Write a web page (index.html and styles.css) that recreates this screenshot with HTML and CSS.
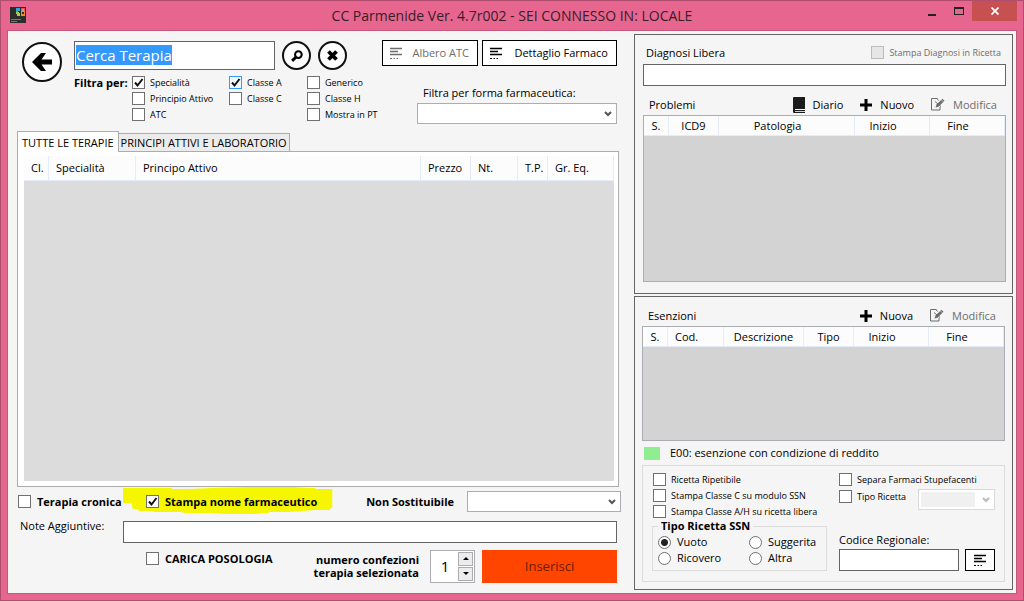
FILE: index.html
```html
<!DOCTYPE html>
<html lang="it">
<head>
<meta charset="utf-8">
<meta name="viewport" content="width=device-width, initial-scale=1">
<title>CC Parmenide Ver. 4.7r002</title>
<link rel="stylesheet" href="styles.css">
<script src="app.js" defer></script>
</head>
<body>
<svg class="defs" aria-hidden="true">
  <symbol id="i-list" viewBox="0 0 14 14"><path d="M1 2.500h12M1 5.500h8M1 8.500h12" stroke="currentColor" stroke-width="1.500" fill="none"/><path d="M1 12.500h2M4.500 12.500h1.500M7.500 12.500h1.500" stroke="currentColor" fill="none"/></symbol>
  <symbol id="i-plus" viewBox="0 0 12 12"><path d="M6 0v12M0 6h12" stroke="currentColor" stroke-width="3"/></symbol>
  <symbol id="i-edit" viewBox="0 0 14 13"><path d="M6.500 .5H.5v11.500h8.500V9M6 .5L7.500 2.500" fill="none" stroke="currentColor"/><path d="M4.500 9.500l1-3L11.500 .8 13.500 2.800 7.500 8.700z" fill="currentColor"/><path d="M4 3.500l6 5" stroke="currentColor"/><path d="M10.300 1.800l2 2" stroke="#f5f5f5" stroke-width=".6"/></symbol>
</svg>
<div class="window">
  <header class="titlebar">
    <svg class="app-logo" viewBox="0 0 16 16" aria-hidden="true"><path fill="#2d2d2d" d="M0 0h16v16H0z"/><path fill="#28a9d8" d="M6 1h4v3H8v2H6z"/><path fill="#a8cf45" d="M6 5h3v1h1v3H7V7H6z"/><path fill="#e8504a" d="M11 1h4v3h-1V2h-2v2h-1z"/><path fill="#a9a9a9" d="M12 2h2v3h-2z"/><path fill="#f28a2c" d="M11 4h1v3h2V4h1v5h-4z"/><path stroke="#aaa" stroke-width=".6" d="M1 12.500h10M1 14.500h6"/></svg>
    <h1 class="title">CC Parmenide Ver. 4.7r002 - SEI CONNESSO IN: LOCALE</h1>
    <div class="controls">
      <button class="ctl" aria-label="Riduci a icona"><svg width="8" height="12"><path fill="#222" d="M0 9h8v2H0z"/></svg></button>
      <button class="ctl" aria-label="Ingrandisci"><svg width="10" height="12"><path fill="#222" fill-rule="evenodd" d="M0 2h10v8H0zM1 4v5h8V4z"/></svg></button>
      <button class="ctl close" aria-label="Chiudi"><svg width="8" height="8"><path d="M.5.5l7 7M7.500.5l-7 7" stroke="#fff" stroke-width="1.700"/></svg></button>
    </div>
  </header>

  <main class="content">
    <section class="therapy">
      <div class="search-area">
        <button class="round back" aria-label="Indietro"><svg width="20" height="20" viewBox="0 0 20 20"><path fill="#000" d="M0 10L9 1h5L9.500 7.500H20v5H9.500L14 19H9z"/></svg></button>
        <div class="search">
          <div class="search-row">
            <input class="field search-field" id="cerca" type="text" value="Cerca Terapia" aria-label="Cerca Terapia">
            <button class="round" aria-label="Cerca"><svg width="12" height="12" viewBox="0 0 13 13"><circle cx="8" cy="5" r="3.600" fill="none" stroke="#000" stroke-width="2.200"/><path d="M5.500 7.500L1.200 11.800" stroke="#000" stroke-width="3.200"/></svg></button>
            <button class="round" aria-label="Cancella"><svg width="11" height="11" viewBox="0 0 11 11"><path d="M1.500 1.500l8 8M9.500 1.500l-8 8" stroke="#000" stroke-width="3.800"/></svg></button>
          </div>
          <div class="filters">
            <span class="bold">Filtra per:</span>
            <div class="checks">
              <label class="check"><input type="checkbox" checked>Specialità</label>
              <label class="check"><input type="checkbox">Principio Attivo</label>
              <label class="check"><input type="checkbox">ATC</label>
            </div>
            <div class="checks">
              <label class="check"><input class="hot" type="checkbox" checked>Classe A</label>
              <label class="check"><input type="checkbox">Classe C</label>
            </div>
            <div class="checks">
              <label class="check"><input type="checkbox">Generico</label>
              <label class="check"><input type="checkbox">Classe H</label>
              <label class="check"><input type="checkbox">Mostra in PT</label>
            </div>
          </div>
        </div>
        <div class="actions">
          <div class="action-row">
            <button class="btn" disabled><svg class="icon"><use href="#i-list"/></svg>Albero ATC</button>
            <button class="btn"><svg class="icon"><use href="#i-list"/></svg>Dettaglio Farmaco</button>
          </div>
          <label class="form-label" for="forma">Filtra per forma farmaceutica:</label>
          <select class="select form-select" id="forma"><option></option></select>
        </div>
      </div>

      <div class="tabs" role="tablist">
        <button class="tab active" role="tab" aria-selected="true">TUTTE LE TERAPIE</button>
        <button class="tab" role="tab" aria-selected="false">PRINCIPI ATTIVI E LABORATORIO</button>
      </div>
      <div class="tab-panel" role="tabpanel">
        <table class="grid tall">
          <colgroup><col class="w25"><col class="w87"><col><col class="w50"><col class="w47"><col class="w30"><col class="w66"></colgroup>
          <thead><tr><th>Cl.</th><th>Specialità</th><th>Principo Attivo</th><th>Prezzo</th><th>Nt.</th><th>T.P.</th><th>Gr. Eq.</th></tr></thead>
        </table>
      </div>

      <div class="row options">
        <label class="check strong chronic"><input type="checkbox">Terapia cronica</label>
        <div class="marked">
          <svg class="marker" viewBox="0 0 212 28" preserveAspectRatio="none" aria-hidden="true"><path fill="#f6f600" d="M0 1h49v1h19l22-1 37-1h44l16 1h7v1h17v19h-2v2h-16l-12 1-16 1h-18v1l-17 1h-27l-15-1h-25l-5-1H31v-1H16l-1-2H10l-1-3H9v-3H0z"/></svg>
          <label class="check strong"><input type="checkbox" checked>Stampa nome farmaceutico</label>
        </div>
        <label class="bold push" for="nonsost">Non Sostituibile</label>
        <select class="select replace-select" id="nonsost"><option></option></select>
      </div>
      <div class="row notes">
        <label class="notes-label" for="note">Note Aggiuntive:</label>
        <input class="field grow" id="note" type="text">
      </div>
      <div class="row submit">
        <label class="check strong dosage"><input type="checkbox">CARICA POSOLOGIA</label>
        <label class="bold packs" for="packs">numero confezioni<br>terapia selezionata</label>
        <div class="spinner">
          <input id="packs" type="text" inputmode="numeric" value="1">
          <div class="spin-buttons">
            <button aria-label="Aumenta"><svg width="6" height="3"><path d="M0 3l3-3 3 3z"/></svg></button>
            <button aria-label="Diminuisci"><svg width="6" height="3"><path d="M0 0l3 3 3-3z"/></svg></button>
          </div>
        </div>
        <button class="insert">Inserisci</button>
      </div>
    </section>

    <aside class="side">
      <section class="panel problems">
        <div class="bar diagnosis">
          <label for="diagnosi">Diagnosi Libera</label>
          <label class="check disabled"><input type="checkbox" disabled>Stampa Diagnosi in Ricetta</label>
        </div>
        <input class="field" id="diagnosi" type="text">
        <div class="bar tools">
          <h2 class="heading">Problemi</h2>
          <button class="tool"><svg class="book" viewBox="0 0 12 16"><path fill="#1c1c1c" d="M0 1q0-1 1-1h11v12H2v1h10v3H1q-1 0-1-1z"/><path d="M2 12.500h10M2 14.500h10" stroke="#fff" stroke-width=".8"/></svg>Diario</button>
          <button class="tool"><svg class="plus"><use href="#i-plus"/></svg>Nuovo</button>
          <button class="tool" disabled><svg class="edit"><use href="#i-edit"/></svg>Modifica</button>
        </div>
        <div class="grid-box">
          <table class="grid centered">
            <colgroup><col class="w25"><col class="w50"><col><col class="w75"><col class="w75"></colgroup>
            <thead><tr><th>S.</th><th>ICD9</th><th class="shift">Patologia</th><th class="shift">Inizio</th><th class="shift">Fine</th></tr></thead>
          </table>
        </div>
      </section>

      <section class="panel exemptions">
        <div class="bar tools">
          <h2 class="heading">Esenzioni</h2>
          <button class="tool"><svg class="plus"><use href="#i-plus"/></svg>Nuova</button>
          <button class="tool" disabled><svg class="edit"><use href="#i-edit"/></svg>Modifica</button>
        </div>
        <div class="grid-box">
          <table class="grid centered">
            <colgroup><col class="w25"><col class="w56"><col><col class="w50"><col class="w75"><col class="w75"></colgroup>
            <thead><tr><th>S.</th><th class="left">Cod.</th><th>Descrizione</th><th>Tipo</th><th class="shift">Inizio</th><th class="shift">Fine</th></tr></thead>
          </table>
        </div>
        <p class="legend"><span class="swatch"></span>E00: esenzione con condizione di reddito</p>
        <div class="recipe">
          <div class="recipe-left">
            <div class="checks">
              <label class="check"><input type="checkbox">Ricetta Ripetibile</label>
              <label class="check"><input type="checkbox">Stampa Classe C su modulo SSN</label>
              <label class="check"><input type="checkbox">Stampa Classe A/H su ricetta libera</label>
            </div>
            <fieldset class="ssn">
              <legend>Tipo Ricetta SSN</legend>
              <label class="radio"><input type="radio" name="ssn" checked>Vuoto</label>
              <label class="radio"><input type="radio" name="ssn">Suggerita</label>
              <label class="radio"><input type="radio" name="ssn">Ricovero</label>
              <label class="radio"><input type="radio" name="ssn">Altra</label>
            </fieldset>
          </div>
          <div class="recipe-right">
            <label class="check"><input type="checkbox">Separa Farmaci Stupefacenti</label>
            <div class="type-row">
              <label class="check"><input type="checkbox">Tipo Ricetta</label>
              <select class="select type-select" aria-label="Tipo Ricetta" disabled><option></option></select>
            </div>
            <label class="code-label" for="codice">Codice Regionale:</label>
            <div class="code-row">
              <input class="field grow" id="codice" type="text">
              <button class="btn code-btn" aria-label="Elenco codici"><svg class="icon"><use href="#i-list"/></svg></button>
            </div>
          </div>
        </div>
      </section>
    </aside>
  </main>
</div>
</body>
</html>
```

FILE: app.js
```js
// Start with the search text selected, ready to be typed over.
const search = document.getElementById("cerca");
search.focus();
search.select();
```

FILE: styles.css
```css
*, *::before { box-sizing: border-box; }

body {
  margin: 0;
  font: 11px/16px "Open Sans", "Noto Sans", sans-serif;
  color: #000;
}

button, input, select { font: inherit; color: inherit; margin: 0; padding: 0; }
button { cursor: pointer; border: 0; background: none; }
svg { flex: none; display: block; }
.defs { position: absolute; width: 0; height: 0; }

/* Window frame */
.window {
  min-height: 100vh;
  display: flex;
  flex-direction: column;
  padding: 0 6px 6px;
  border: 1px solid #b04e70;
  background: #e6668f;
}
.titlebar {
  display: grid;
  grid-template-columns: 120px 1fr 120px;
  height: 29px;
}
.app-logo { width: 16px; height: 16px; margin: 6px 3px; }
.title {
  margin: 0;
  font-size: 14px;
  font-weight: 400;
  line-height: 29px;
  text-align: center;
  color: #3a1c28;
}
.controls { display: flex; justify-content: flex-end; align-items: flex-start; }
.ctl { width: 27px; height: 20px; display: grid; place-items: center; }
.close { width: 45px; background: #c75050; }

.content {
  flex: 1;
  display: grid;
  grid-template-columns: minmax(0, 604fr) minmax(0, 379fr);
  gap: 13px;
  padding: 3px 3px 3px 9px;
  border: 1px solid #c3587b;
  background: #f5f5f5;
}

/* Shared controls */
.field {
  width: 100%;
  height: 22px;
  padding: 0 4px;
  border: 1px solid #646464;
  background: #fff;
}
.grow { flex: 1; min-width: 0; }
.bold { font-weight: 700; }
.round {
  flex: none;
  width: 29px;
  height: 29px;
  display: grid;
  place-items: center;
  border: 2px solid #111;
  border-radius: 50%;
  background: #fff;
}
.btn {
  display: flex;
  align-items: center;
  justify-content: space-between;
  height: 26px;
  padding: 0 8px 0 6px;
  border: 1px solid #000;
  background: #fff;
  white-space: nowrap;
}
.icon { width: 14px; height: 14px; }
button:disabled { color: #6d6d6d; }
.select {
  appearance: none;
  height: 21px;
  border: 1px solid #abadb3;
  border-radius: 0;
  background: #fff url("data:image/svg+xml,%3Csvg xmlns='http://www.w3.org/2000/svg' width='8' height='6'%3E%3Cpath d='M1 1l3 3 3-3' fill='none' stroke='%23555' stroke-width='2'/%3E%3C/svg%3E") no-repeat right 4px center;
}
.select:disabled { opacity: 1; }

.checks { display: flex; flex-direction: column; gap: 3px; }
.check {
  display: flex;
  align-items: center;
  gap: 5px;
  font-size: 9px;
  line-height: 13px;
  white-space: nowrap;
}
.check input {
  appearance: none;
  flex: none;
  width: 13px;
  height: 13px;
  border: 1px solid #707070;
  background: #fff;
}
.check input:checked {
  background: url("data:image/svg+xml,%3Csvg xmlns='http://www.w3.org/2000/svg' width='11' height='11'%3E%3Cpath d='M2 5.500l2.500 3L9.500 2' fill='none' stroke='%23111' stroke-width='2'/%3E%3C/svg%3E") center no-repeat #fff;
}
.check input.hot { border-color: #3399ff; background-color: #f0f7ff; }
.strong { font-size: 11px; font-weight: 700; gap: 6px; }
.disabled { color: #6d6d6d; }
.disabled input { border-color: #bcbcbc; background: #e6e6e6; }

/* Therapy column */
.therapy { display: flex; flex-direction: column; padding-top: 6px; }
.search-area { display: flex; padding: 0 4px 0 5px; }
.back { width: 40px; height: 40px; margin: 2px 12px 0 0; }
.search-row {
  display: grid;
  grid-template-columns: 201px 29px 29px;
  column-gap: 7px;
  align-items: center;
  padding-top: 1px;
}
.search-field { height: 29px; padding: 0 1px 2px; font-size: 15px; outline: 0; }
.search-field::selection { background: #3399ff; color: #fff; }
.filters {
  display: grid;
  grid-template-columns: 58px 97px 78px 71px;
  padding-top: 6px;
}
.filters .bold { line-height: 13px; }
.actions { flex: 1; display: flex; flex-direction: column; padding-left: 4px; }
.action-row { display: grid; grid-template-columns: 96fr 135fr; gap: 4px; }
.form-label { margin: 19px 0 2px 41px; }
.form-select { margin-left: 35px; }

.tabs { display: flex; align-items: flex-end; margin-top: 7px; }
.tab {
  height: 18px;
  padding: 0 2px;
  border: 1px solid #acacac;
  border-width: 1px 1px 0 0;
  background: #ececec;
  line-height: 17px;
  white-space: nowrap;
}
.tab.active {
  position: relative;
  height: 21px;
  margin-bottom: -1px;
  padding: 0 4px;
  border-left-width: 1px;
  background: #fff;
}
.tab-panel {
  flex: 1;
  margin-right: 2px;
  padding: 4px 4px 5px 6px;
  border: 1px solid #acacac;
  background: linear-gradient(#dcdcdc, #dcdcdc) content-box, #fff;
}

.grid { width: 100%; table-layout: fixed; border-collapse: separate; border-spacing: 0; }
.grid th {
  height: 20px;
  padding: 0 0 0 7px;
  border: solid #e3ecf8;
  border-width: 0 1px 1px 0;
  background: #fcfcfc;
  font-weight: 400;
  text-align: left;
  white-space: nowrap;
}
.tall th { height: 25px; }
.centered th { padding: 0; text-align: center; }
.grid .left { padding-left: 7px; text-align: left; }
.grid .shift { padding-right: 18px; }
.w25 { width: 25px; }
.w30 { width: 30px; }
.w47 { width: 47px; }
.w50 { width: 50px; }
.w56 { width: 56px; }
.w66 { width: 66px; }
.w75 { width: 75px; }
.w87 { width: 87px; }

.row { display: flex; align-items: center; }
.options { height: 29px; }
.chronic { flex: none; width: 106px; padding-left: 1px; }
.marked { position: relative; padding: 0 16px 0 23px; }
.marker { position: absolute; left: 0; top: -8px; width: 100%; height: 28px; }
.marked .check { position: relative; }
.push { margin-left: auto; }
.replace-select { width: 154px; margin-left: 13px; }
.notes { height: 32px; padding-right: 4px; }
.notes-label { width: 106px; padding: 2px 0 0 3px; align-self: flex-start; }
.submit { height: 36px; padding-right: 4px; margin-bottom: 6px; }
.dosage { padding-left: 129px; align-self: flex-start; margin-top: 4px; }
.packs { margin-left: auto; text-align: right; line-height: 13px; }
.spinner {
  display: flex;
  width: 45px;
  height: 33px;
  margin: 0 7px 0 11px;
  padding: 1px;
  border: 1px solid #abadb3;
  background: #fff;
}
.spinner input { width: 26px; border: 0; background: none; font-size: 15px; text-align: center; }
.spin-buttons { flex: 1; display: grid; gap: 1px; }
.spin-buttons button { display: grid; place-items: center; border: 1px solid #acacac; background: #ececec; }
.insert { width: 135px; height: 33px; background: #ff4500; color: #6b1d00; font-size: 13px; }

/* Side column */
.side { display: grid; grid-template-rows: 260fr 294fr; gap: 2px; min-width: 0; }
.panel { display: flex; flex-direction: column; padding: 0 6px 0 8px; border: 1px solid #646464; }
.bar { display: flex; align-items: center; }
.diagnosis { justify-content: space-between; height: 29px; padding: 6px 5px 0 3px; }
.tools { height: 29px; padding: 8px 9px 0 6px; gap: 17px; }
.heading { margin: 0 auto 0 0; font-size: 11px; font-weight: 400; }
.tool { display: flex; align-items: center; gap: 8px; }
.plus { width: 12px; height: 12px; }
.edit { width: 14px; height: 13px; }
.book { width: 12px; height: 16px; }
.grid-box { flex: 1; border: 1px solid #abadb3; background: #d3d3d3; }
.problems { padding-bottom: 11px; }
.exemptions { padding: 0 7px 7px; }
.legend { display: flex; align-items: center; gap: 10px; height: 24px; margin: 0; padding-left: 2px; }
.swatch { width: 16px; height: 13px; background: #90ee90; }

.recipe {
  display: grid;
  grid-template-columns: 175fr 156fr;
  gap: 12px;
  height: 117px;
  padding: 7px 9px;
  border: 1px solid #dcdcdc;
}
.recipe .checks { padding-left: 1px; }
.ssn {
  display: grid;
  grid-template-columns: 91px auto;
  min-width: 0;
  margin: 0;
  padding: 0 0 4px 5px;
  border: 1px solid #dcdcdc;
}
.ssn legend { padding: 0 3px; font-weight: 700; line-height: 16px; }
.radio { display: flex; align-items: center; gap: 6px; }
.radio input {
  appearance: none;
  flex: none;
  width: 13px;
  height: 13px;
  border: 1px solid #707070;
  border-radius: 50%;
  background: #fff;
}
.radio input:checked { background: radial-gradient(circle, #222 0 3px, #fff 4px); }
.recipe-right { min-width: 0; }
.type-row { display: flex; justify-content: space-between; align-items: flex-start; padding-top: 3px; }
.type-row .check { padding-top: 1px; }
.type-select {
  width: 77px;
  border-color: #d9d9d9;
  background-image: linear-gradient(#f0f0f0, #f0f0f0), url("data:image/svg+xml,%3Csvg xmlns='http://www.w3.org/2000/svg' width='8' height='6'%3E%3Cpath d='M1 1l3 3 3-3' fill='none' stroke='%23bbb' stroke-width='2'/%3E%3C/svg%3E");
  background-position: 2px 2px, right 4px center;
  background-size: 54px 15px, 8px 6px;
}
.code-label { display: block; padding-top: 22px; }
.code-row { display: flex; gap: 6px; padding-top: 1px; }
.code-btn { width: 30px; height: 22px; padding: 0 7px; }
```
